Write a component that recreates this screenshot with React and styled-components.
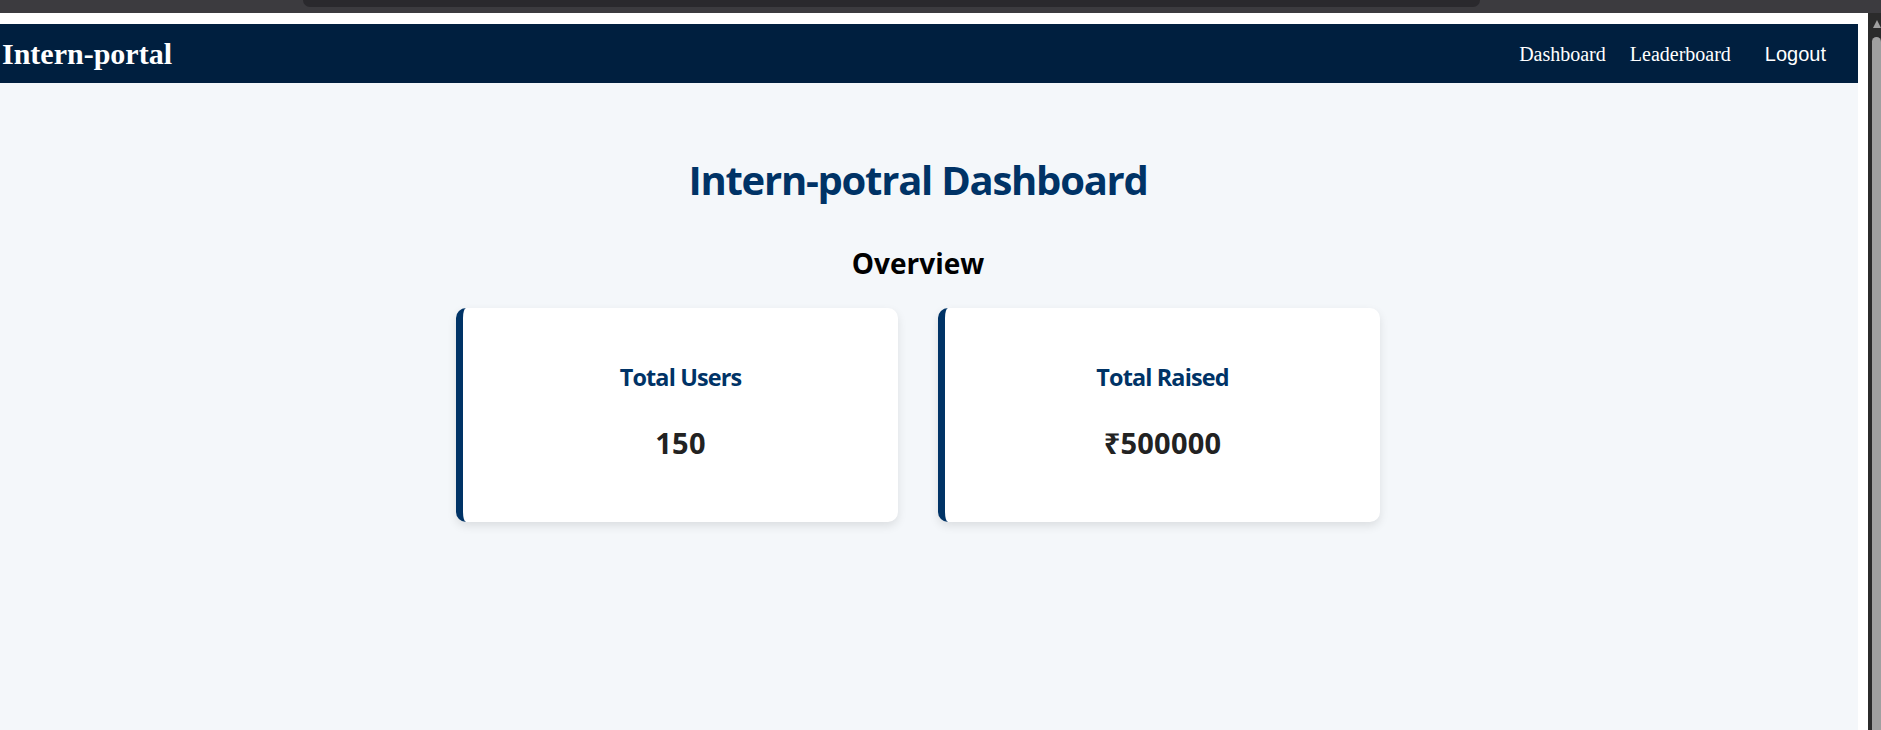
import styled, { createGlobalStyle } from "styled-components";

const GlobalStyle = createGlobalStyle`
  html, body {
    margin: 0;
    padding: 0;
    height: 100%;
    overflow: hidden;
    background: #3c3b3f;
  }
  #root {
    height: 100%;
  }
  * {
    box-sizing: border-box;
  }
`;

const Screen = styled.div`
  display: flex;
  flex-direction: column;
  height: 730px;
  width: 1881px;
`;

const ChromeBar = styled.div`
  height: 13px;
  flex-shrink: 0;
  background: #3c3b3f;
  padding-left: 303px;
`;

const ChromeTab = styled.div`
  width: 1177px;
  height: 7px;
  background: #2a292d;
  border-radius: 0 0 8px 8px;
`;

const WindowBody = styled.div`
  flex: 1;
  display: flex;
  min-height: 0;
`;

const Page = styled.div`
  flex: 1;
  display: flex;
  flex-direction: column;
  background: #ffffff;
  padding: 11px 10px 0 0;
`;

const Scrollbar = styled.div`
  width: 13px;
  flex-shrink: 0;
  background: #2b2b2b;
  display: flex;
  flex-direction: column;
  align-items: flex-end;
  padding-top: 7px;
`;

const ScrollArrow = styled.div`
  width: 0;
  height: 0;
  border-left: 4.5px solid transparent;
  border-right: 4.5px solid transparent;
  border-bottom: 8px solid #a0a0a0;
`;

const ScrollThumb = styled.div`
  width: 9px;
  flex: 1;
  margin-top: 9px;
  background: #a0a0a0;
  border-radius: 5px 5px 0 0;
`;

const Navbar = styled.nav`
  height: 59px;
  flex-shrink: 0;
  display: flex;
  align-items: center;
  justify-content: space-between;
  background: #001f3f;
  padding: 0 24px 0 2px;
`;

const Logo = styled.h2`
  margin: 0;
  font-family: "Liberation Serif", "Times New Roman", serif;
  font-weight: 700;
  font-size: 30px;
  line-height: 1.2;
  color: #ffffff;
`;

const NavLinks = styled.div`
  display: flex;
  align-items: center;
  gap: 24px;
`;

const NavLink = styled.a`
  font-family: "Liberation Serif", "Times New Roman", serif;
  font-size: 20px;
  line-height: 1.2;
  color: #ffffff;
  text-decoration: none;
  cursor: pointer;
`;

const LogoutButton = styled.button`
  font-family: "Liberation Sans", Arial, sans-serif;
  font-size: 20px;
  line-height: 1.2;
  color: #ffffff;
  background: transparent;
  border: none;
  padding: 0 8px 0 10px;
  cursor: pointer;
`;

const Main = styled.main`
  flex: 1;
  background: #f4f7fa;
  display: flex;
  flex-direction: column;
  align-items: center;
  padding: 73px 22px 0 0;
  font-family: "Open Sans", "Noto Sans", sans-serif;
`;

const Title = styled.h1`
  margin: 0;
  font-size: 40px;
  font-weight: 700;
  line-height: 1.2;
  letter-spacing: -1.25px;
  color: #003366;
`;

const SectionTitle = styled.h2`
  margin: 43px 0 0;
  font-size: 28px;
  font-weight: 700;
  line-height: 1.2;
  color: #000000;
`;

const CardRow = styled.div`
  display: flex;
  justify-content: center;
  gap: 40px;
  margin-top: 27px;
`;

const Card = styled.div`
  width: 442px;
  height: 214px;
  background: #ffffff;
  border-left: 7px solid #003366;
  border-radius: 10px;
  box-shadow: 0 4px 10px rgba(0, 0, 0, 0.1);
  display: flex;
  flex-direction: column;
  align-items: center;
  padding-top: 55px;
  gap: 35px;
`;

const CardLabel = styled.h3`
  margin: 0;
  font-size: 23.4px;
  font-weight: 700;
  line-height: 1.2;
  letter-spacing: -0.85px;
  color: #003366;
`;

const CardValue = styled.p`
  margin: 0;
  font-size: 29px;
  font-weight: 700;
  line-height: 1.2;
  letter-spacing: 0.2px;
  color: #222222;
`;

const stats = [
  { label: "Total Users", value: "150" },
  { label: "Total Raised", value: "₹500000" },
];

const App = () => {
  return (
    <>
      <GlobalStyle />
      <Screen>
        <ChromeBar>
          <ChromeTab />
        </ChromeBar>
        <WindowBody>
          <Page>
            <Navbar>
              <Logo>Intern-portal</Logo>
              <NavLinks>
                <NavLink>Dashboard</NavLink>
                <NavLink>Leaderboard</NavLink>
                <LogoutButton type="button">Logout</LogoutButton>
              </NavLinks>
            </Navbar>
            <Main>
              <Title>Intern-potral Dashboard</Title>
              <SectionTitle>Overview</SectionTitle>
              <CardRow>
                {stats.map((s) => (
                  <Card key={s.label}>
                    <CardLabel>{s.label}</CardLabel>
                    <CardValue>{s.value}</CardValue>
                  </Card>
                ))}
              </CardRow>
            </Main>
          </Page>
          <Scrollbar>
            <ScrollArrow />
            <ScrollThumb />
          </Scrollbar>
        </WindowBody>
      </Screen>
    </>
  );
};

export default App;
